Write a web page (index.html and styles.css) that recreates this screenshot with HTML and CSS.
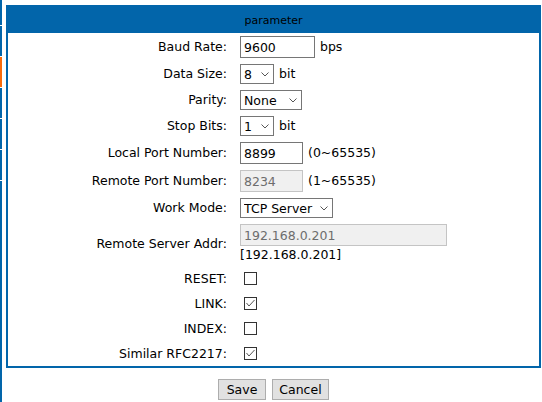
FILE: index.html
```html
<!DOCTYPE html>
<html>
<head>
<meta charset="utf-8">
<link rel="stylesheet" href="styles.css">
</head>
<body>
<div class="page">
  <nav class="rail">
    <span class="seg first"></span>
    <span class="seg"></span>
    <span class="seg active"></span>
    <span class="seg"></span>
    <span class="seg"></span>
    <span class="seg"></span>
    <span class="seg rest"></span>
  </nav>
  <main class="content">
    <section class="panel">
      <div class="panel-head">parameter</div>
      <div class="form">
        <div class="lbl">Baud Rate:</div>
        <div class="val"><input class="txt w-baud" type="text" value="9600"><span class="unit">bps</span></div>

        <div class="lbl">Data Size:</div>
        <div class="val"><span class="sel"><select class="w-small"><option>8</option></select><svg class="chev" width="8" height="5" viewBox="0 0 8 5"><path d="M0.5 0.5 L4 4 L7.5 0.5" fill="none" stroke="#555" stroke-width="1"/></svg></span><span class="unit">bit</span></div>

        <div class="lbl">Parity:</div>
        <div class="val"><span class="sel"><select class="w-parity"><option>None</option></select><svg class="chev" width="8" height="5" viewBox="0 0 8 5"><path d="M0.5 0.5 L4 4 L7.5 0.5" fill="none" stroke="#555" stroke-width="1"/></svg></span></div>

        <div class="lbl">Stop Bits:</div>
        <div class="val"><span class="sel"><select class="w-small"><option>1</option></select><svg class="chev" width="8" height="5" viewBox="0 0 8 5"><path d="M0.5 0.5 L4 4 L7.5 0.5" fill="none" stroke="#555" stroke-width="1"/></svg></span><span class="unit">bit</span></div>

        <div class="lbl">Local Port Number:</div>
        <div class="val"><input class="txt w-port" type="text" value="8899"><span class="unit">(0~65535)</span></div>

        <div class="lbl">Remote Port Number:</div>
        <div class="val"><input class="txt w-port" type="text" value="8234" disabled><span class="unit">(1~65535)</span></div>

        <div class="lbl">Work Mode:</div>
        <div class="val"><span class="sel"><select class="w-mode"><option>TCP Server</option></select><svg class="chev" width="8" height="5" viewBox="0 0 8 5"><path d="M0.5 0.5 L4 4 L7.5 0.5" fill="none" stroke="#555" stroke-width="1"/></svg></span></div>

        <div class="lbl">Remote Server Addr:</div>
        <div class="val stack"><input class="txt w-addr" type="text" value="192.168.0.201" disabled><span class="addr-note">[192.168.0.201]</span></div>

        <div class="lbl">RESET:</div>
        <div class="val"><span class="cb"></span></div>

        <div class="lbl">LINK:</div>
        <div class="val"><span class="cb"><svg width="11" height="11" viewBox="0 0 11 11"><path d="M1.5 5 L4 8 L9.5 2" fill="none" stroke="#555" stroke-width="1"/></svg></span></div>

        <div class="lbl">INDEX:</div>
        <div class="val"><span class="cb"></span></div>

        <div class="lbl">Similar RFC2217:</div>
        <div class="val"><span class="cb"><svg width="11" height="11" viewBox="0 0 11 11"><path d="M1.5 5 L4 8 L9.5 2" fill="none" stroke="#555" stroke-width="1"/></svg></span></div>
      </div>
    </section>
    <div class="actions">
      <button class="btn w-save" type="button">Save</button>
      <button class="btn w-cancel" type="button">Cancel</button>
    </div>
  </main>
</div>
</body>
</html>
```
FILE: styles.css
```css
html, body {
  margin: 0;
  padding: 0;
  background: #ffffff;
}
body {
  font-family: "DejaVu Sans", Verdana, sans-serif;
  font-size: 12.5px;
  color: #000;
}
.page {
  display: flex;
  width: 542px;
  height: 402px;
  overflow: hidden;
}
.rail {
  width: 2px;
  display: flex;
  flex-direction: column;
  gap: 1px;
  flex: none;
}
.seg {
  display: block;
  height: 30px;
  background: #0265aa;
  flex: none;
}
.seg.first { height: 25px; }
.seg.active { background: #f96b0c; }
.seg.rest { flex: 1; }
.content {
  margin-left: 4px;
  width: 535px;
  padding-top: 5px;
}
.panel-head {
  height: 28px;
  box-sizing: border-box;
  background: #0265aa;
  text-align: center;
  font-size: 11px;
  line-height: 24px;
  padding-top: 4px;
}
.form {
  border: 2px solid #0265aa;
  border-top: none;
  display: grid;
  grid-template-columns: 229px 1fr;
}
.lbl {
  display: flex;
  align-items: center;
  justify-content: flex-end;
  padding: 3px 10px 3px 0;
  line-height: 16px;
  white-space: nowrap;
}
.val {
  display: flex;
  align-items: center;
  padding: 3px 0 3px 3px;
  line-height: 16px;
}
.val.stack {
  flex-direction: column;
  align-items: flex-start;
}
.txt {
  box-sizing: border-box;
  height: 22px;
  margin: 0;
  border: 1px solid #767676;
  padding: 0 3px;
  font-family: "DejaVu Sans", Verdana, sans-serif;
  font-size: 12.5px;
  color: #000;
  background: #fff;
  outline: none;
}
.txt:disabled {
  background: #f0f0f0;
  border-color: #c4c4c4;
  color: #6d6d6d;
}
.w-baud { width: 75px; }
.w-port { width: 63px; }
.w-addr { width: 207px; }
.unit {
  margin-left: 5px;
  white-space: nowrap;
}
.addr-note {
  display: block;
  margin-top: 1px;
}
.sel {
  position: relative;
  display: inline-flex;
}
.sel select {
  -webkit-appearance: none;
  appearance: none;
  box-sizing: border-box;
  height: 20px;
  margin: 0;
  border: 1px solid #767676;
  border-radius: 0;
  background: #fff;
  padding: 0 0 0 3px;
  font-family: "DejaVu Sans", Verdana, sans-serif;
  font-size: 12.5px;
  color: #000;
  outline: none;
}
.chev {
  position: absolute;
  right: 5px;
  top: 8px;
  pointer-events: none;
}
.w-small { width: 34px; }
.w-parity { width: 62px; }
.w-mode { width: 93px; }
.cb {
  box-sizing: border-box;
  width: 13px;
  height: 13px;
  margin: 3px 3px 3px 4px;
  border: 1px solid #333;
  background: #fff;
  display: inline-flex;
  align-items: center;
  justify-content: center;
}
.cb svg { display: block; }
.actions {
  display: flex;
  justify-content: center;
  gap: 6px;
  margin-top: 11px;
}
.btn {
  box-sizing: border-box;
  height: 21px;
  margin: 0;
  padding: 0;
  border: 1px solid #adadad;
  background: #e1e1e1;
  font-family: "DejaVu Sans", Verdana, sans-serif;
  font-size: 12.5px;
  color: #000;
}
.w-save { width: 48px; }
.w-cancel { width: 57px; }
```
